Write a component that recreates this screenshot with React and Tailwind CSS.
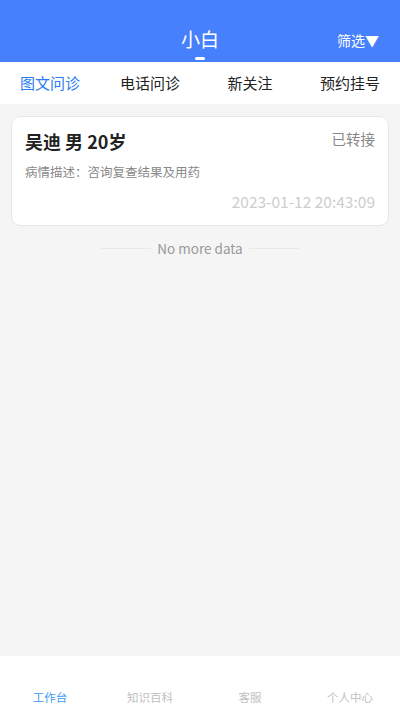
const font = { fontFamily: '"Noto Sans CJK SC", "Noto Sans", sans-serif' };

const tabs = ['图文问诊', '电话问诊', '新关注', '预约挂号'];
const navs = ['工作台', '知识百科', '客服', '个人中心'];

export default function App() {
  return (
    <div className="h-[711px] w-[400px] flex flex-col bg-[#f5f5f5] overflow-hidden" style={font}>
      {/* header */}
      <div className="relative h-[62px] bg-[#4680fd] flex flex-col items-center shrink-0">
        <div className="mt-[25px] text-[19px] leading-[28px] text-white">小白</div>
        <div className="mt-[4px] w-[10px] h-[3px] rounded-full bg-white"></div>
        <div className="absolute right-[21px] top-[30px] text-[14px] leading-[20px] text-white">筛选▼</div>
      </div>

      {/* tabs */}
      <div className="h-[42px] bg-white grid grid-cols-4 shrink-0">
        {tabs.map((t, i) => (
          <div key={t} className={`flex items-center justify-center text-[15px] ${i === 0 ? 'text-[#2b7cf3]' : 'text-[#222]'}`}>
            {t}
          </div>
        ))}
      </div>

      {/* list */}
      <div className="flex-1">
        <div className="mx-[11px] mt-[12px] h-[110px] bg-white rounded-[9px] border border-[#e6e6e6] px-[13px] pt-[11px]">
          <div className="flex justify-between items-start">
            <span className="text-[18px] leading-[26px] font-bold text-[#222]">吴迪 男 20岁</span>
            <span className="text-[14.5px] leading-[22px] text-[#888]">已转接</span>
          </div>
          <div className="mt-[9px] text-[12.5px] leading-[18px] text-[#888]">病情描述：咨询复查结果及用药</div>
          <div className="mt-[10px] text-right text-[15.5px] leading-[20px] text-[#cdcdcd]">2023-01-12 20:43:09</div>
        </div>
        <div className="mt-[13px] flex items-center justify-center gap-[6px]">
          <div className="w-[50px] h-px bg-[#e8e8e8]"></div>
          <span className="text-[13.5px] leading-[18px] text-[#999]">No more data</span>
          <div className="w-[50px] h-px bg-[#e8e8e8]"></div>
        </div>
      </div>

      {/* bottom nav */}
      <div className="h-[55px] bg-white grid grid-cols-4 shrink-0">
        {navs.map((n, i) => (
          <div key={n} className={`flex items-end justify-center pb-[6px] text-[11.5px] leading-[16px] ${i === 0 ? 'text-[#3a9cf5]' : 'text-[#c0c0c0]'}`}>
            {n}
          </div>
        ))}
      </div>
    </div>
  );
}
